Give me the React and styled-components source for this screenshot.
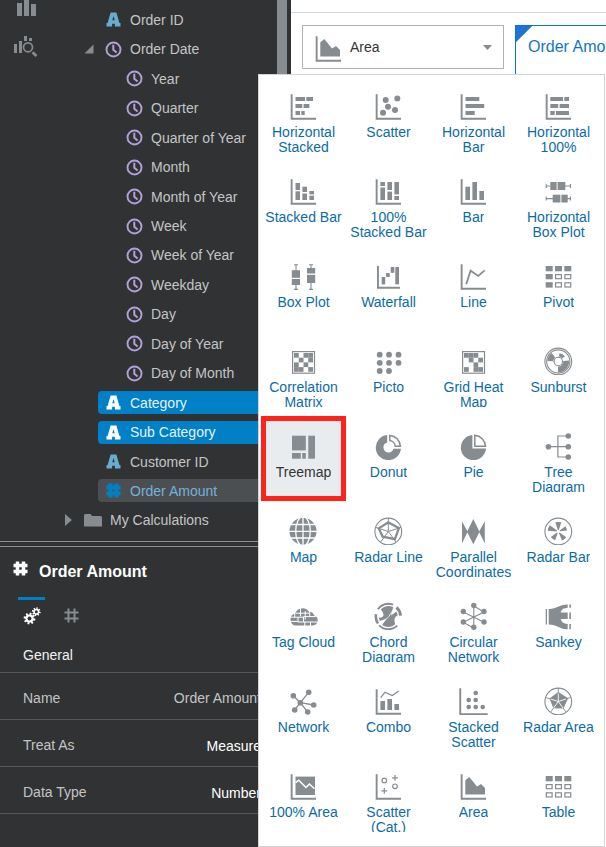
import React from "react";
import styled, { createGlobalStyle } from "styled-components";

const c = {
  dark: "#313234",
  icon: "#878c90",
  text: "#c4c5c6",
  blue: "#0080c6",
  link: "#0b6ca5",
  line: "#555759",
};

const GlobalStyle = createGlobalStyle`
  *, *::before, *::after { box-sizing: border-box; }
  body {
    margin: 0;
    background: #fff;
    font-family: "Liberation Sans", Arial, Helvetica, sans-serif;
    font-size: 14px;
  }
  button, input { font: inherit; color: inherit; background: none; border: 0; padding: 0; margin: 0; }
  button { cursor: pointer; }
  svg { display: block; flex: none; }
`;

const Page = styled.div`
  display: flex;
  height: 100vh;
  overflow: hidden;
`;

const Sidebar = styled.aside`
  display: flex;
  flex-direction: column;
  flex: none;
  width: 291px;
  background: ${c.dark};
  color: ${c.text};
`;

const DataPane = styled.div`
  display: flex;
  flex: 1;
  min-height: 0;
  overflow: hidden;
  padding-right: 4px;
`;

const Rail = styled.nav`
  display: flex;
  flex-direction: column;
  align-items: center;
  gap: 18px;
  width: 59px;
  padding-right: 7px;
  color: ${c.icon};
`;

const Tree = styled.ul`
  display: flex;
  flex-direction: column;
  justify-content: space-between;
  flex: 1;
  list-style: none;
  margin: -21px 0 9px;
  padding: 0;
`;

const TreeRow = styled.li`
  display: flex;
  align-items: center;
  height: 23px;
  padding-left: ${(p) => p.$level * 21}px;
`;

const Caret = styled.button`
  display: flex;
  justify-content: center;
  width: 18px;
  color: ${c.icon};
`;

const CaretSpace = styled.span`
  width: 18px;
`;

const states = {
  selected: `background: ${c.blue}; color: #e4f2fa;`,
  current: "background: #4c4f52; color: #73b2dc;",
};

const Field = styled.div`
  display: flex;
  align-items: center;
  gap: 8px;
  flex: 1;
  height: 23px;
  padding-left: 7px;
  border-radius: 4px 0 0 4px;
  white-space: nowrap;
  ${(p) => states[p.$state] || ""}
`;

const ScrollThumb = styled.div`
  width: 10px;
  background: ${c.icon};
`;

const Properties = styled.section`
  height: 306px;
  flex: none;
  border-top: 1px solid #8c8d8f;
`;

const PropTitle = styled.h2`
  display: flex;
  align-items: baseline;
  gap: 10px;
  margin: 4px 0 0;
  padding: 13px 12px 0;
  height: 51px;
  border-top: 1px solid #8c8d8f;
  color: #fff;
  font-size: 16px;
`;

const TabList = styled.div`
  display: flex;
  gap: 13px;
  padding-left: 18px;
`;

const Tab = styled.button`
  display: flex;
  justify-content: center;
  width: 27px;
  height: 31px;
  padding-top: 7px;
  border-top: 3px solid ${(p) => (p.$active ? c.blue : "transparent")};
  color: ${(p) => (p.$active ? "#fff" : c.icon)};
`;

const Group = styled.h3`
  display: flex;
  align-items: center;
  height: 45px;
  margin: 0;
  padding: 10px 23px 0;
  border-bottom: 1px solid ${c.line};
  color: #f2f2f2;
  font-size: 14px;
  font-weight: 400;
`;

const PropRow = styled.div`
  display: flex;
  align-items: center;
  justify-content: space-between;
  height: 47px;
  padding: 4px 30px 0 23px;
  border-bottom: 1px solid ${c.line};
`;

const NameInput = styled.input`
  width: 120px;
  text-align: right;
`;

const ValueButton = styled.button`
  padding-top: 2px;
  color: #fff;
`;

const Main = styled.main`
  flex: 1;
  min-width: 0;
`;

const TopBar = styled.header`
  height: 13px;
  border-bottom: 1px solid #cfdbe0;
`;

const Controls = styled.div`
  display: flex;
  align-items: flex-start;
  gap: 11px;
  padding: 12px 0 0 11px;
`;

const Picker = styled.div`
  position: relative;
  flex: none;
`;

const PickerButton = styled.button`
  display: flex;
  align-items: center;
  gap: 7px;
  width: 202px;
  height: 44px;
  padding: 0 11px;
  border: 1px solid #b0b3b5;
  background: #fff;
  color: #333;
  text-align: left;

  svg { color: ${c.icon}; }
  span { flex: 1; }
`;

const Filter = styled.button`
  flex: 1;
  min-width: 0;
  height: 60px;
  padding: 0 0 18px 12px;
  overflow: hidden;
  border: solid #0f76c6;
  border-width: 1px 0 0 1px;
  background: linear-gradient(135deg, #1f73d2 11px, transparent 12px);
  color: #0f76c6;
  font-size: 16px;
  text-align: left;
  white-space: nowrap;
`;

const Menu = styled.div`
  position: absolute;
  z-index: 2;
  top: 49px;
  left: -44px;
  display: grid;
  grid-template-columns: repeat(4, 85px);
  padding: 1px 3px 5px 2px;
  border: 1px solid #d2d4d5;
  background: #fff;
`;

const Tile = styled.button`
  display: flex;
  flex-direction: column;
  align-items: center;
  gap: 5px;
  height: 85px;
  padding: 15px 3px 0;
  color: ${(p) => (p.$selected ? "#333" : c.link)};
  background: ${(p) => (p.$selected ? "#e8ecef" : "none")};
  box-shadow: ${(p) => (p.$selected ? "inset 0 0 0 5px #fe2419" : "none")};

  svg { color: ${c.icon}; }
`;

const TileLabel = styled.span`
  height: 27px;
  overflow: hidden;
  line-height: 15px;
`;

/* ---------- icons ---------- */

const Svg = ({ w = 29, h = w, children }) => (
  <svg width={w} height={h} viewBox={`0 0 ${w} ${h}`} fill="currentColor" aria-hidden="true">
    {children}
  </svg>
);

const Axis = () => <path d="M1.7 3.3h1.9v23.5H27v1.9H1.7z" />;

/* Each entry is [x1, y1, x2, y2]. */
const Boxes = ({ list, outline }) =>
  list.map(([x1, y1, x2, y2], i) =>
    outline ? (
      <rect key={i} x={x1 + 0.6} y={y1 + 0.6} width={x2 - x1 - 1.2} height={y2 - y1 - 1.2} fill="none" stroke="currentColor" strokeWidth="1.2" />
    ) : (
      <rect key={i} x={x1} y={y1} width={x2 - x1} height={y2 - y1} />
    )
  );

const Dots = ({ r, list }) => list.map(([x, y], i) => <circle key={i} cx={x} cy={y} r={r} />);

const Cells = ({ rows }) =>
  rows.flatMap((row, y) =>
    [...row].map((ch, x) => (ch === "#" ? <rect key={`${x}-${y}`} x={5 + x * 4.75} y={7 + y * 4.7} width="4.75" height="4.7" /> : null))
  );

const Frame = () => <rect x="3.6" y="5.6" width="21.9" height="21.6" fill="none" stroke="currentColor" strokeWidth="1.2" />;

const cols = [[1.7, 8.7], [11, 18], [20.3, 27.3]];
const rows = [[5, 10.3], [13, 18.3], [21.2, 26.6]];
const GridCells = ({ filled }) => {
  const all = rows.flatMap(([y1, y2], r) => cols.map(([x1, x2], k) => ({ on: filled(r, k), box: [x1, y1, x2, y2] })));
  return (
    <>
      <Boxes list={all.filter((a) => a.on).map((a) => a.box)} />
      <Boxes outline list={all.filter((a) => !a.on).map((a) => a.box)} />
    </>
  );
};

const polar = (deg, r, cx = 14.3, cy = 15.5) => {
  const a = (deg * Math.PI) / 180;
  return `${(cx + r * Math.cos(a)).toFixed(2)} ${(cy + r * Math.sin(a)).toFixed(2)}`;
};
const sector = (a, b, r, r0 = 0) =>
  `M${polar(a, r0)}L${polar(a, r)}A${r} ${r} 0 0 1 ${polar(b, r)}L${polar(b, r0)}` + (r0 ? `A${r0} ${r0} 0 0 0 ${polar(a, r0)}z` : "z");
const spokes = [-90, -18, 54, 126, 198];
const spokePath = (r) => spokes.map((a) => `M14.3 15.5L${polar(a, r)}`).join("");
const Ring = ({ r = 13.4 }) => <circle cx="14.3" cy="15.5" r={r} fill="none" stroke="currentColor" strokeWidth="1.1" />;

const AreaIcon = () => (
  <Svg><Axis /><path d="M6.3 9.3l4-3.2 7.7 9.4 4-2.4 4 3.9v6.6H6.3z" /></Svg>
);

const charts = [
  ["Horizontal Stacked", <Svg><Axis /><Boxes list={[[6.5, 6, 16, 10], [17.3, 6, 24, 10], [6.5, 13, 13.3, 17], [14.6, 13, 20.4, 17], [6.5, 20, 11, 24], [12.3, 20, 15.7, 24]]} /></Svg>],
  ["Scatter", <Svg><Axis /><Dots r={3} list={[[11.7, 9], [23.3, 7.5], [14, 15.7], [21, 19], [9, 21.7]]} /></Svg>],
  ["Horizontal Bar", <Svg><Axis /><Boxes list={[[6.5, 6, 20.3, 10], [6.5, 13, 25.2, 17], [6.5, 20, 15.7, 24]]} /></Svg>],
  ["Horizontal 100%", <Svg><Axis /><Boxes list={[[6.3, 6, 19, 10], [20.3, 6, 25, 10], [6.3, 13, 14.2, 17], [15.6, 13, 25, 17], [6.3, 20, 10.7, 24], [12, 20, 25, 24]]} /></Svg>],

  ["Stacked Bar", <Svg><Axis /><Boxes list={[[6.5, 7, 11, 14], [6.5, 15.3, 11, 24], [13.4, 10.7, 18, 16], [13.4, 17.5, 18, 24], [20.4, 15, 25, 18.4], [20.4, 19.7, 25, 24]]} /></Svg>],
  ["100% Stacked Bar", <Svg><Axis /><Boxes list={[[6.4, 6, 11, 10], [6.4, 11.5, 11, 24], [13.4, 6, 18, 14], [13.4, 15.6, 18, 24], [20.4, 6, 25, 18.4], [20.4, 20, 25, 24]]} /></Svg>],
  ["Bar", <Svg><Axis /><Boxes list={[[6.4, 10.7, 11, 24], [13.4, 6, 18, 24], [20.4, 15, 25, 24]]} /></Svg>],
  ["Horizontal Box Plot", (
    <Svg>
      <path d="M2.2 8v4M2.2 10h4M21 10h5.5M26.5 8v4M2.2 20.6v4M2.2 22.6H9M23 22.6h3.5M26.5 20.6v4" stroke="currentColor" strokeWidth="1.1" />
      <Boxes list={[[6.3, 6, 12.6, 14], [13.6, 6, 21.3, 14], [8.7, 18.7, 16.4, 26.5], [17.4, 18.7, 23.7, 26.5]]} />
    </Svg>
  )],

  ["Box Plot", (
    <Svg>
      <path d="M5 3.7h4M7 3.7v6M7 24v4.6M5 28.4h4M20 3.7h4M22 3.7v4M22 22v6.5M20 28.4h4" stroke="currentColor" strokeWidth="1.1" />
      <Boxes list={[[2.8, 9.2, 11, 16.8], [2.8, 18, 11, 24], [18, 7, 26.2, 12.5], [18, 13.8, 26.2, 22]]} />
    </Svg>
  )],
  ["Waterfall", <Svg><path d="M3 5h1.9v20.8H26v1.9H3z" /><Boxes list={[[7.7, 16, 11.2, 23.4], [12.1, 12, 15.7, 16], [16.7, 6, 20.3, 11.8], [21.3, 6, 25, 23.4]]} /></Svg>],
  ["Line", <Svg><Axis /><path d="M7.2 23.3l4.4-13.6 7.7 5.2 6.4-5.5" fill="none" stroke="currentColor" strokeWidth="1.8" /></Svg>],
  ["Pivot", <Svg><GridCells filled={(r, k) => r === 0 || k === 0} /></Svg>],

  ["Correlation Matrix", <Svg><Frame /><Cells rows={["#.##", ".#.#", "#.#.", "##.#"]} /></Svg>],
  ["Picto", <Svg><Dots r={2.9} list={[[5.7, 8.7], [15, 8.7], [24.5, 8.7], [5.7, 16.8], [15, 16.8], [24.5, 16.8], [5.7, 25], [15, 25]]} /></Svg>],
  ["Grid Heat Map", <Svg><Frame /><Cells rows={["###.", ".#.#", "..#.", "#.##"]} /></Svg>],
  ["Sunburst", (
    <Svg>
      <Ring /><Ring r={11.6} />
      <path d={sector(-5, 92, 10.8, 5)} /><path d={sector(182, 232, 10.8, 5)} /><path d={sector(278, 322, 8.4, 5)} />
      <Ring r={4.2} />
    </Svg>
  )],

  ["Treemap", <Svg><Boxes list={[[3, 4.7, 16.8, 19.4], [3, 22, 11.8, 27.7], [13.2, 22, 16.8, 27.7], [19.3, 4.7, 26, 27.7]]} /></Svg>],
  ["Donut", (
    <Svg>
      <path d="M13.2 4a12.6 12.6 0 1 0 13.7 13.7h-7.6a5 5 0 1 1-6.1-6.1z" />
      <path d="M15.8 4.4a11.6 11.6 0 0 1 10.6 10.8h-5.2a6 6 0 0 0-5.4-5.6z" fill="none" stroke="currentColor" strokeWidth="1.5" />
    </Svg>
  )],
  ["Pie", (
    <Svg>
      <path d="M13.4 4a12.6 12.6 0 1 0 13.6 13.6H13.4z" />
      <path d="M15.8 4.3a11.6 11.6 0 0 1 10.7 10.9H15.8z" fill="none" stroke="currentColor" strokeWidth="1.5" />
    </Svg>
  )],
  ["Tree Diagram", <Svg><path d="M4 15.7h20M24 5H13.9v21H24" fill="none" stroke="currentColor" strokeWidth="1.2" /><Dots r={2.8} list={[[4.4, 15.7], [24.3, 5], [24.3, 15.7], [24.3, 26]]} /></Svg>],

  ["Map", (
    <Svg>
      <circle cx="14" cy="15.3" r="13.5" />
      <g fill="none" stroke="#fff" strokeWidth="1.3">
        <path d="M14 1v28M0 15.3h28M2 8.5h24M2 22h24" />
        <ellipse cx="14" cy="15.3" rx="7.3" ry="14.6" />
      </g>
    </Svg>
  )],
  ["Radar Line", (
    <Svg>
      <Ring />
      <path d={spokePath(13.4)} stroke="currentColor" strokeWidth="1" />
      <path d="M4.8 12.4l9.5-6 10.6 5.7-4 11-12.2-2.4z" fill="none" stroke="currentColor" strokeWidth="2.3" />
    </Svg>
  )],
  ["Parallel Coordinates", <Svg><path d="M3 5.2l5.6 10.6L3 27.6zM14.3 3l6.2 12.8-6.2 12.4-6.2-12.4zM25.8 5.2L20 15.8l5.8 11.8z" /></Svg>],
  ["Radar Bar", (
    <Svg>
      <Ring />
      {[[-108, -72, 9.6], [-36, -6, 8.8], [36, 68, 9.8], [110, 144, 9.2], [184, 216, 10.6]].map(([a, b, r]) => <path key={a} d={sector(a, b, r, 1.6)} />)}
    </Svg>
  )],

  ["Tag Cloud", (
    <Svg>
      <path d="M7.2 24.6a6.2 6.2 0 0 1-1-12.2 7.6 7.6 0 0 1 13.4-1.8 6 6 0 0 1 5.6 3.9 5.2 5.2 0 0 1-1.4 10.1z" />
      <path d="M6.5 12.2h14M11.5 6v9.4M.5 16.2h14M16.2 10v8.5M9 16.2V21M.8 20.4h8M8.8 21h20M14.5 15.7v5.3M14.7 15.6h12M15.8 21v5M21.5 21v5M5.7 12v4M20.7 10v5.5" fill="none" stroke="#fff" strokeWidth="1" />
    </Svg>
  )],
  ["Chord Diagram", (
    <Svg>
      <path d={sector(-145, -68, 13.7, 11.8)} /><path d={sector(-48, -4, 13.7, 10.8)} />
      <path d={sector(46, 136, 13.7, 11.8)} /><path d={sector(146, 190, 13.7, 11.2)} />
      <path d={`M${polar(-136, 10.4)}A10.4 10.4 0 0 1 ${polar(-62, 10.4)}L17 14.5L${polar(-32, 9.6)}L${polar(-8, 9.6)}Q18.5 16.5 ${polar(48, 10.4)}A10.4 10.4 0 0 1 ${polar(126, 10.4)}L12.500 17.500L${polar(152, 9.6)}L${polar(172, 9.6)}Q13 16.500 ${polar(-136, 10.4)}z`} />
      <path d="M20.700 6.500L14.800 15.500L6.500 24" fill="none" stroke="#fff" strokeWidth="0.8" />
    </Svg>
  )],
  ["Circular Network", <Svg><path d="M4.3 11L25 21.3M4.3 21.3L25 11M14.8 5v22.3M14.8 5L25 11M4.3 21.3l10.5 6" stroke="currentColor" strokeWidth="1.1" /><Dots r={2.7} list={[[14.8, 4.5], [25, 10.5], [25, 21], [14.8, 26.3], [4.3, 21], [4.3, 10.5]]} /></Svg>],
  ["Sankey", (
    <Svg>
      <path d="M1.7 8h1.3v15.5H1.7zM4.7 8c9 0 9.5-4.4 19-4.5v3.2c-4.5.2-6 1.6-7 4.7h7V18h-7c1 3.3 2.700 4.600 7 4.900v5.300c-9.500-.2-10-4.700-19-4.700zM25.300 3.500h1.600v3.200h-1.600zM25.300 11.400h1.600V18h-1.600zM25.300 22.900h1.600v5.300h-1.600z" />
    </Svg>
  )],

  ["Network", <Svg><path d="M11.3 16.7l-7-7M11.3 16.7l8.400-10.400M11.3 16.7l13.400 2.300M11.3 16.7l7.400 9.300M11.3 16.7L5.700 24" stroke="currentColor" strokeWidth="1.3" /><Dots r={2.8} list={[[11.3, 16.7], [4.3, 9.7], [19.7, 6.3], [24.7, 19], [18.7, 26], [5.7, 24]]} /></Svg>],
  ["Combo", <Svg><Axis /><Boxes list={[[6.4, 15, 11, 24], [13.4, 13, 18, 24], [20.4, 18, 25, 24]]} /><path d="M6.7 11.7L11 6.200l7.300 3.300L24.700 5" fill="none" stroke="currentColor" strokeWidth="1.3" /></Svg>],
  ["Stacked Scatter", <Svg><path d="M.3 2.300h1.900v24.900h26.500V29H.3z" /><Dots r={2.3} list={[[16.7, 7], [9.7, 14], [16.7, 14], [9.7, 21], [16.7, 21], [23.7, 21]]} /></Svg>],
  ["Radar Area", (
    <Svg>
      <Ring />
      <path d={spokePath(13.4)} stroke="currentColor" strokeWidth="0.9" />
      <path d={`M${polar(-90, 9.4)}L${polar(-18, 10.4)}L${polar(54, 8.6)}L${polar(126, 8.2)}L${polar(198, 9.4)}z`} />
      <path d={spokePath(8)} stroke="#fff" strokeWidth="0.9" />
    </Svg>
  )],

  ["100% Area", <Svg><Axis /><path d="M6.5 5.600H26V24H6.500z" /><path d="M6.500 11.700l3.200-2.500 7.300 7.300 3.400-3.500 5.100 4.700" fill="none" stroke="#fff" strokeWidth="1.5" /></Svg>],
  ["Scatter (Cat.)", (
    <Svg>
      <Axis />
      <g fill="none" stroke="currentColor" strokeWidth="1.2">
        <circle cx="10.3" cy="9.5" r="2.3" /><circle cx="21" cy="15.3" r="2.3" />
        <path d="M21 4v5.800M18.100 6.900h5.800M10.300 17v5.800M7.400 19.900h5.800" />
      </g>
    </Svg>
  )],
  ["Area", <AreaIcon />],
  ["Table", <Svg><GridCells filled={(r) => r === 0} /></Svg>],
];

const ClockIcon = () => (
  <Svg w={17}>
    <g fill="none" stroke="#b3a0d9">
      <circle cx="8.5" cy="8.5" r="7" strokeWidth="1.9" />
      <path d="M8.300 3.800v5l3.300 2.700" strokeWidth="2" />
    </g>
  </Svg>
);

const AttributeIcon = ({ color = "#6aaccf" }) => (
  <Svg w={17}>
    <path fill={color} fillRule="evenodd" d="M5.600 1.500h5.800l3 10.500h1.100v3.500H9.900v-2.800H7.100v2.800H1.500V12h1.100zM7.300 9.300h2.400L8.500 5z" />
  </Svg>
);

const HashIcon = ({ color = "currentColor", weight = 3 }) => (
  <Svg w={17}>
    <path d="M5.500 1.500v14M11.500 1.500v14M1.500 5.500h14M1.500 11.500h14" stroke={color} strokeWidth={weight} />
  </Svg>
);

const FolderIcon = () => (
  <Svg w={18} h={17}>
    <path fill={c.icon} d="M0 3.500Q0 2 1.500 2h5L8 4h8.500Q18 4 18 5.500v9H0z" />
  </Svg>
);

const DatasetIcon = () => (
  <Svg w={17}>
    <path fill="none" stroke={c.icon} strokeWidth="1.5" d="M1 4l7.500-3L16 4v10.500l-7.500 2L1 14.500zM1 4l7.500 3L16 4M8.500 7v9.500" />
  </Svg>
);

const gear = (cx, cy, r, teeth) => {
  const lines = [];
  for (let i = 0; i < teeth; i += 1) lines.push(`M${cx} ${cy}L${polar((360 / teeth) * i + 12, r, cx, cy)}`);
  return lines.join("");
};
const Gears = () => (
  <Svg w={18}>
    <g stroke="currentColor">
      <path d={gear(6.5, 11.5, 5.9, 8)} strokeWidth="1.9" />
      <path d={gear(13.3, 4.7, 4.4, 8)} strokeWidth="1.4" />
    </g>
    <circle cx="6.5" cy="11.5" r="4.1" /><circle cx="13.3" cy="4.7" r="3" />
    <circle cx="6.5" cy="11.5" r="1.9" fill={c.dark} /><circle cx="13.3" cy="4.7" r="1.5" fill={c.dark} />
  </Svg>
);

const BarsIcon = () => (
  <Svg w={19} h={17}><path d="M0 3h5v13H0zM7 0h5v16H7zM14 4h5v12h-5z" /></Svg>
);

const ExploreIcon = () => (
  <Svg w={24} h={22}>
    <path d="M0 9h3v9H0zM5 6h3v12H5zM10 1h3v5h-3zM15 3h3v3h-3z" />
    <circle cx="14" cy="12.3" r="4.5" fill="none" stroke="currentColor" strokeWidth="1.7" />
    <path d="M18.500 17.300l4 3.700" stroke="currentColor" strokeWidth="2.8" />
  </Svg>
);

const CaretOpen = () => <Svg w={10}><path d="M9.500.5v9h-9z" /></Svg>;
const CaretClosed = () => <Svg w={7} h={12}><path d="M0 0l7 6-7 6z" /></Svg>;
const CaretDown = () => <Svg w={9} h={5}><path d="M0 0h9L4.500 5z" /></Svg>;

/* ---------- data ---------- */

const dateParts = ["Year", "Quarter", "Quarter of Year", "Month", "Month of Year", "Week", "Week of Year", "Weekday", "Day", "Day of Year", "Day of Month"];

const fields = [
  { level: 0, icon: <DatasetIcon /> },
  { level: 1, icon: <AttributeIcon />, label: "Order ID" },
  { level: 1, icon: <ClockIcon />, label: "Order Date", caret: <CaretOpen /> },
  ...dateParts.map((label) => ({ level: 2, icon: <ClockIcon />, label })),
  { level: 1, icon: <AttributeIcon color="#fff" />, label: "Category", state: "selected" },
  { level: 1, icon: <AttributeIcon color="#fff" />, label: "Sub Category", state: "selected" },
  { level: 1, icon: <AttributeIcon />, label: "Customer ID" },
  { level: 1, icon: <HashIcon color={c.blue} weight={4} />, label: "Order Amount", state: "current" },
  { level: 0, icon: <FolderIcon />, label: "My Calculations", caret: <CaretClosed /> },
];

export default function App() {
  return (
    <Page>
      <GlobalStyle />
      <Sidebar>
        <DataPane>
          <Rail>
            <button aria-label="Visualizations"><BarsIcon /></button>
            <button aria-label="Analytics"><ExploreIcon /></button>
          </Rail>
          <Tree>
            {fields.map((f, i) => (
              <TreeRow key={i} $level={f.level}>
                {f.caret ? <Caret aria-label={`Toggle ${f.label}`}>{f.caret}</Caret> : <CaretSpace />}
                <Field $state={f.state}>
                  {f.icon}
                  {f.label}
                </Field>
              </TreeRow>
            ))}
          </Tree>
          <ScrollThumb />
        </DataPane>
        <Properties>
          <PropTitle><HashIcon weight={3.5} />Order Amount</PropTitle>
          <TabList>
            <Tab $active aria-label="General settings"><Gears /></Tab>
            <Tab aria-label="Number format"><HashIcon weight={2} /></Tab>
          </TabList>
          <Group>General</Group>
          <PropRow>
            <label htmlFor="field-name">Name</label>
            <NameInput id="field-name" defaultValue="Order Amount" />
          </PropRow>
          <PropRow>
            <label htmlFor="treat-as">Treat As</label>
            <ValueButton id="treat-as">Measure</ValueButton>
          </PropRow>
          <PropRow>
            <label htmlFor="data-type">Data Type</label>
            <ValueButton id="data-type">Number</ValueButton>
          </PropRow>
        </Properties>
      </Sidebar>
      <Main>
        <TopBar />
        <Controls>
          <Picker>
            <PickerButton aria-haspopup="true" aria-expanded="true">
              <AreaIcon />
              <span>Area</span>
              <CaretDown />
            </PickerButton>
            <Menu>
              {charts.map(([label, icon]) => (
                <Tile key={label} $selected={label === "Treemap"}>
                  {icon}
                  <TileLabel>{label}</TileLabel>
                </Tile>
              ))}
            </Menu>
          </Picker>
          <Filter>Order Amount</Filter>
        </Controls>
      </Main>
    </Page>
  );
}
